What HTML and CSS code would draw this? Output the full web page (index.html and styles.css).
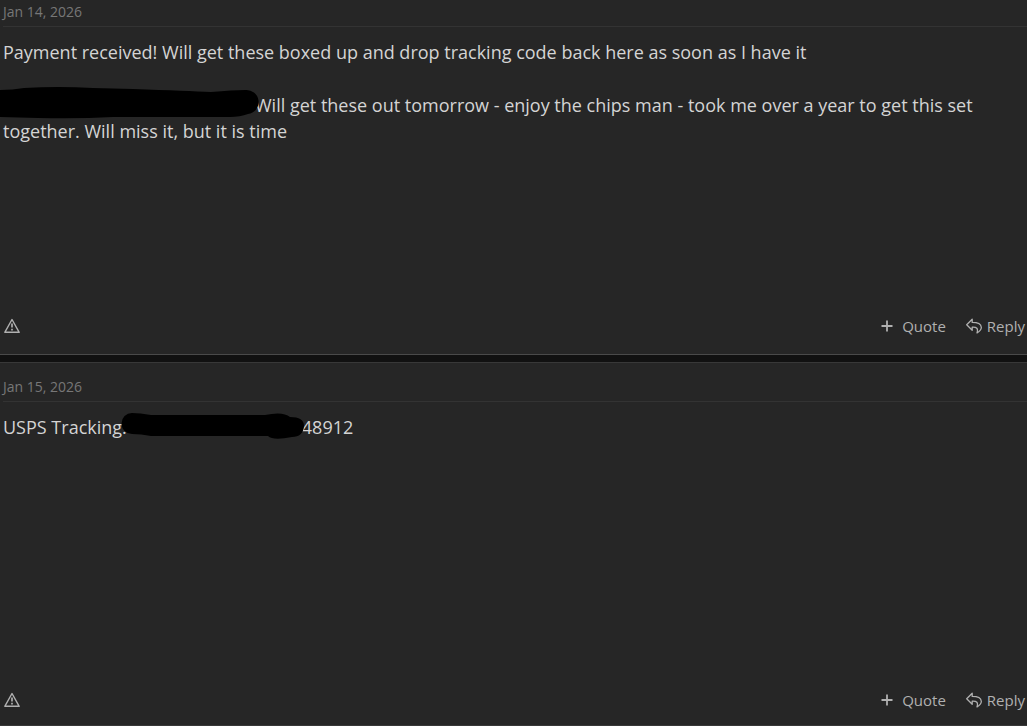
FILE: index.html
```html
<!DOCTYPE html>
<html lang="en">
<head>
  <meta charset="UTF-8" />
  <meta name="viewport" content="width=device-width, initial-scale=1.0" />
  <title>Conversation</title>
  <link rel="stylesheet" href="styles.css">
</head>
<body>
  <!-- shared icons -->
  <svg class="sprite" aria-hidden="true">
    <symbol id="icon-report" viewBox="0 0 16 16">
      <path d="M8 1.5 L15.2 14.3 H0.8 Z" fill="none" stroke="currentColor" stroke-width="1.4" stroke-linejoin="round" />
      <path d="M8 5.5 V9.5 M8 10.8 V12.5" fill="none" stroke="currentColor" stroke-width="1.7" />
    </symbol>
    <symbol id="icon-plus" viewBox="0 0 12 12">
      <path d="M6 0.5 V11.5 M0.5 6 H11.5" fill="none" stroke="currentColor" stroke-width="1.8" />
    </symbol>
    <symbol id="icon-reply" viewBox="0 0 16 16">
      <path d="M6.2 1.2 L0.7 6.8 L6.2 12.2 V9.2 C10.8 9 12.4 10.2 11 15 C14.4 13 15.5 11.2 15.3 9.2 C15 5.8 11.5 4.4 6.2 4.4 Z" fill="none" stroke="currentColor" stroke-width="1.3" stroke-linejoin="round" />
    </symbol>
  </svg>

  <main class="thread">
    <article class="message">
      <header class="message-date"><time datetime="2026-01-14">Jan 14, 2026</time></header>
      <div class="message-body">
        <p>Payment received! Will get these boxed up and drop tracking code back here as soon as I have it</p>
        <p><span class="redacted redacted-address"><svg viewBox="0 0 262 34" aria-hidden="true"><path d="M0 4 Q14 4 26 2 Q60 0 95 2 L135 3 Q190 5 213 6 Q235 4 247 4 A12 12 0 0 1 250 28 Q242 31 232 31 L115 31 Q80 33 40 32 L0 31 Z" /></svg></span>Will get these out tomorrow - enjoy the chips man - took me over a year to get this set together. Will miss it, but it is time</p>
      </div>
      <footer class="message-actions">
        <a href="#" class="action" aria-label="Report"><svg class="icon"><use href="#icon-report" /></svg></a>
        <div class="action-group">
          <a href="#" class="action action-quote"><svg class="icon icon-plus"><use href="#icon-plus" /></svg>Quote</a>
          <a href="#" class="action action-reply"><svg class="icon"><use href="#icon-reply" /></svg>Reply</a>
        </div>
      </footer>
    </article>

    <article class="message">
      <header class="message-date"><time datetime="2026-01-15">Jan 15, 2026</time></header>
      <div class="message-body">
        <p>USPS Tracking:<span class="redacted redacted-code"><svg viewBox="0 0 184 28" aria-hidden="true"><path d="M11 1 Q19 1 30 3 L144 3 Q162 -1 169 5 Q183 5 183 14 Q182 25 171 25 Q152 29 147 24 L30 24 Q20 22 11 22 A10 10 0 0 1 11 1 Z" /></svg></span>48912</p>
      </div>
      <footer class="message-actions">
        <a href="#" class="action" aria-label="Report"><svg class="icon"><use href="#icon-report" /></svg></a>
        <div class="action-group">
          <a href="#" class="action action-quote"><svg class="icon icon-plus"><use href="#icon-plus" /></svg>Quote</a>
          <a href="#" class="action action-reply"><svg class="icon"><use href="#icon-reply" /></svg>Reply</a>
        </div>
      </footer>
    </article>
  </main>
</body>
</html>
```
FILE: styles.css
```css
body {
  margin: 0;
  background: #111111;
  color: #d4d4d4;
  font-family: "Segoe UI", "Open Sans", "Noto Sans", sans-serif;
}

.sprite {
  display: none;
}

.thread {
  display: flex;
  flex-direction: column;
  gap: 7px;
}

.message {
  display: flex;
  flex-direction: column;
  min-height: 364px;
  box-sizing: border-box;
  background: #262626;
  border-top: 1px solid #383838;
  border-bottom: 1px solid #4a4a4a;
}

.message-date {
  margin-left: 3px;
  padding: 14px 0 4px;
  border-bottom: 1px solid #333333;
  color: #777777;
  font-size: 14px;
  line-height: 20px;
}

.message-body {
  flex: 1;
  padding: 12px 3px 0;
  font-size: 18px;
  line-height: 26px;
}

.message-body p {
  margin: 0 0 27px;
}

/* the thread opens right under its first date */
.message:first-child {
  min-height: 355px;
  border-top: 0;
}

.message:last-child {
  border-bottom-color: #383838;
}

.message:first-child .message-date {
  padding-top: 2px;
}

.redacted {
  display: inline-block;
  position: relative;
  height: 20px;
  vertical-align: middle;
}

.redacted svg {
  position: absolute;
  fill: #000000;
}

.redacted-address {
  width: 252px;
}

.redacted-address svg {
  left: -5px;
  top: -11px;
  width: 262px;
  height: 34px;
}

.redacted-code {
  width: 175px;
}

.redacted-code svg {
  left: -6px;
  top: -7px;
  width: 184px;
  height: 28px;
}

.message-actions {
  display: flex;
  justify-content: space-between;
  align-items: center;
  padding: 0 2px 17px 4px;
  font-size: 15px;
  line-height: 22px;
}

.message:last-child .message-actions {
  padding-bottom: 14px;
}

.action-group {
  display: flex;
  gap: 20px;
}

.action {
  display: flex;
  align-items: center;
  gap: 5px;
  color: #b0b0b0;
  text-decoration: none;
}

.action-quote {
  gap: 9px;
}

.icon {
  width: 16px;
  height: 16px;
}

.icon-plus {
  width: 12px;
  height: 12px;
}
```
